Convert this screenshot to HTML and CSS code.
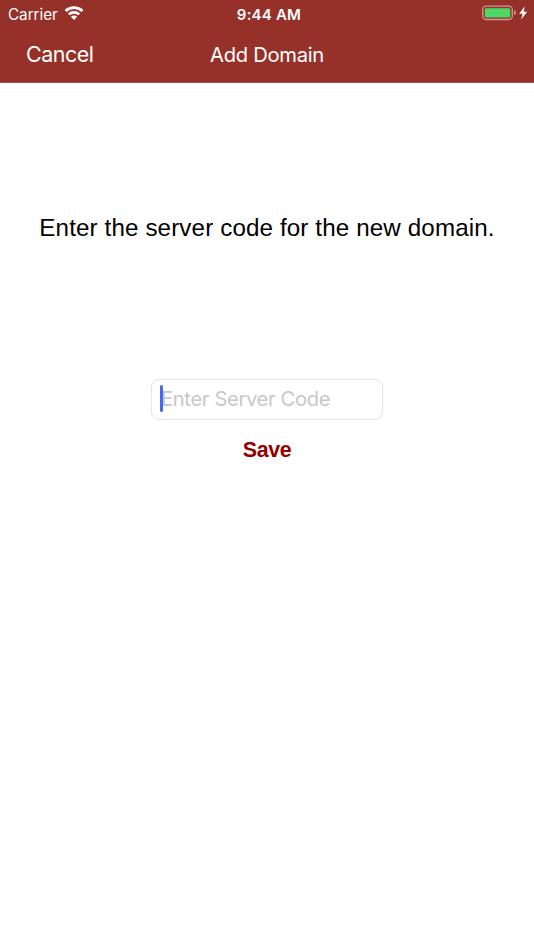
FILE: index.html
```html
<!DOCTYPE html>
<html lang="en">
<head>
<meta charset="utf-8">
<meta name="viewport" content="width=device-width, initial-scale=1">
<title>Add Domain</title>
<link rel="stylesheet" href="styles.css">
</head>
<body>
<header class="header">
  <div class="status">
    <div class="status-left">
      <span class="carrier">Carrier</span>
      <svg class="wifi" width="20" height="14" viewBox="0 0 20 14" aria-hidden="true">
        <g fill="none" stroke="#fff" stroke-width="2.7">
          <path d="M1.6 5a12.1 12.1 0 0 1 16.8 0"/>
          <path d="M4.8 8.4a7.5 7.5 0 0 1 10.4 0"/>
        </g>
        <path fill="#fff" d="M10 13.9 6.9 10.8a4.4 4.4 0 0 1 6.2 0z"/>
      </svg>
    </div>
    <span class="time">9:44 AM</span>
    <div class="status-right">
      <svg width="46" height="16" viewBox="0 0 46 16" aria-hidden="true">
        <rect x=".7" y="1.1" width="29.6" height="13.4" rx="3.5" fill="none" stroke="#fff" stroke-opacity=".5" stroke-width="1.3"/>
        <rect x="2.8" y="3.2" width="25.4" height="9.3" rx="1.5" fill="#4cd964"/>
        <path d="M32 5.3q2 .6 2 2.5t-2 2.5z" fill="#fff" fill-opacity=".5"/>
        <path d="M42.7 1.2 37.3 8.8h3.3l-1.5 5.8 6.1-7.9h-3.5z" fill="#fff"/>
      </svg>
    </div>
  </div>
  <nav class="nav">
    <a class="cancel"><span>Cancel</span></a>
    <h1 class="title"><span>Add Domain</span></h1>
  </nav>
</header>
<main class="content">
  <p class="message"><span>Enter the server code for the new domain.</span></p>
  <div class="field"><span class="caret"></span><span class="placeholder">Enter Server Code</span></div>
  <button class="save" type="button">Save</button>
</main>
</body>
</html>
```
FILE: styles.css
```css
* { box-sizing: border-box; }
body {
  margin: 0;
  background: #fff;
  font-family: Inter, "Liberation Sans", sans-serif;
}
.header {
  height: 83px;
  background: #96312a;
  border-bottom: 1px solid #a4504a;
  color: #fff;
}
.status {
  display: grid;
  grid-template-columns: 1fr auto 1fr;
  height: 28px;
  padding: 0 6px 0 8px;
  align-items: center;
}
.status-left { display: flex; align-items: center; gap: 6px; }
.carrier { margin-top: 1px; font-size: 15.3px; line-height: 20px; letter-spacing: -0.05px; }
.wifi { margin-top: -2px; }
.time { margin: 1px 0 0 2px; font-size: 15px; line-height: 20px; font-weight: 600; letter-spacing: 0.2px; }
.status-right { display: flex; justify-content: flex-end; }
.status-right svg { margin-top: -2px; }
.nav {
  display: grid;
  grid-template-columns: 1fr auto 1fr;
  height: 54px;
  padding: 0 26px;
  align-items: center;
}
.cancel { margin-top: -2px; font-size: 21.4px; line-height: 28px; letter-spacing: -0.45px; }
.title { margin: 0; font-size: 20.2px; line-height: 28px; font-weight: 400; letter-spacing: -0.3px; }
.content {
  display: flex;
  flex-direction: column;
  align-items: center;
}
.message {
  margin: 131px 0 0;
  font: 24.2px/28px "Liberation Sans", sans-serif;
  letter-spacing: 0.12px;
  color: #000;
  white-space: nowrap;
}
.field {
  display: flex;
  align-items: center;
  width: 232px;
  height: 41px;
  margin-top: 137px;
  padding: 0 0 2px 8px;
  border: 1px solid #e3e3e3;
  border-radius: 8px;
}
.caret { width: 3px; height: 27px; border-radius: 1.5px; background: #426bf2; z-index: 1; }
.placeholder {
  margin-left: -2px;
  font-size: 20.2px;
  line-height: 28px;
  letter-spacing: -0.35px;
  color: #c7c7cc;
}
.save {
  margin-top: 16px;
  padding: 0;
  border: 0;
  background: none;
  font: bold 21.4px/28px "Liberation Sans", sans-serif;
  letter-spacing: -0.4px;
  color: #940000;
}
```
